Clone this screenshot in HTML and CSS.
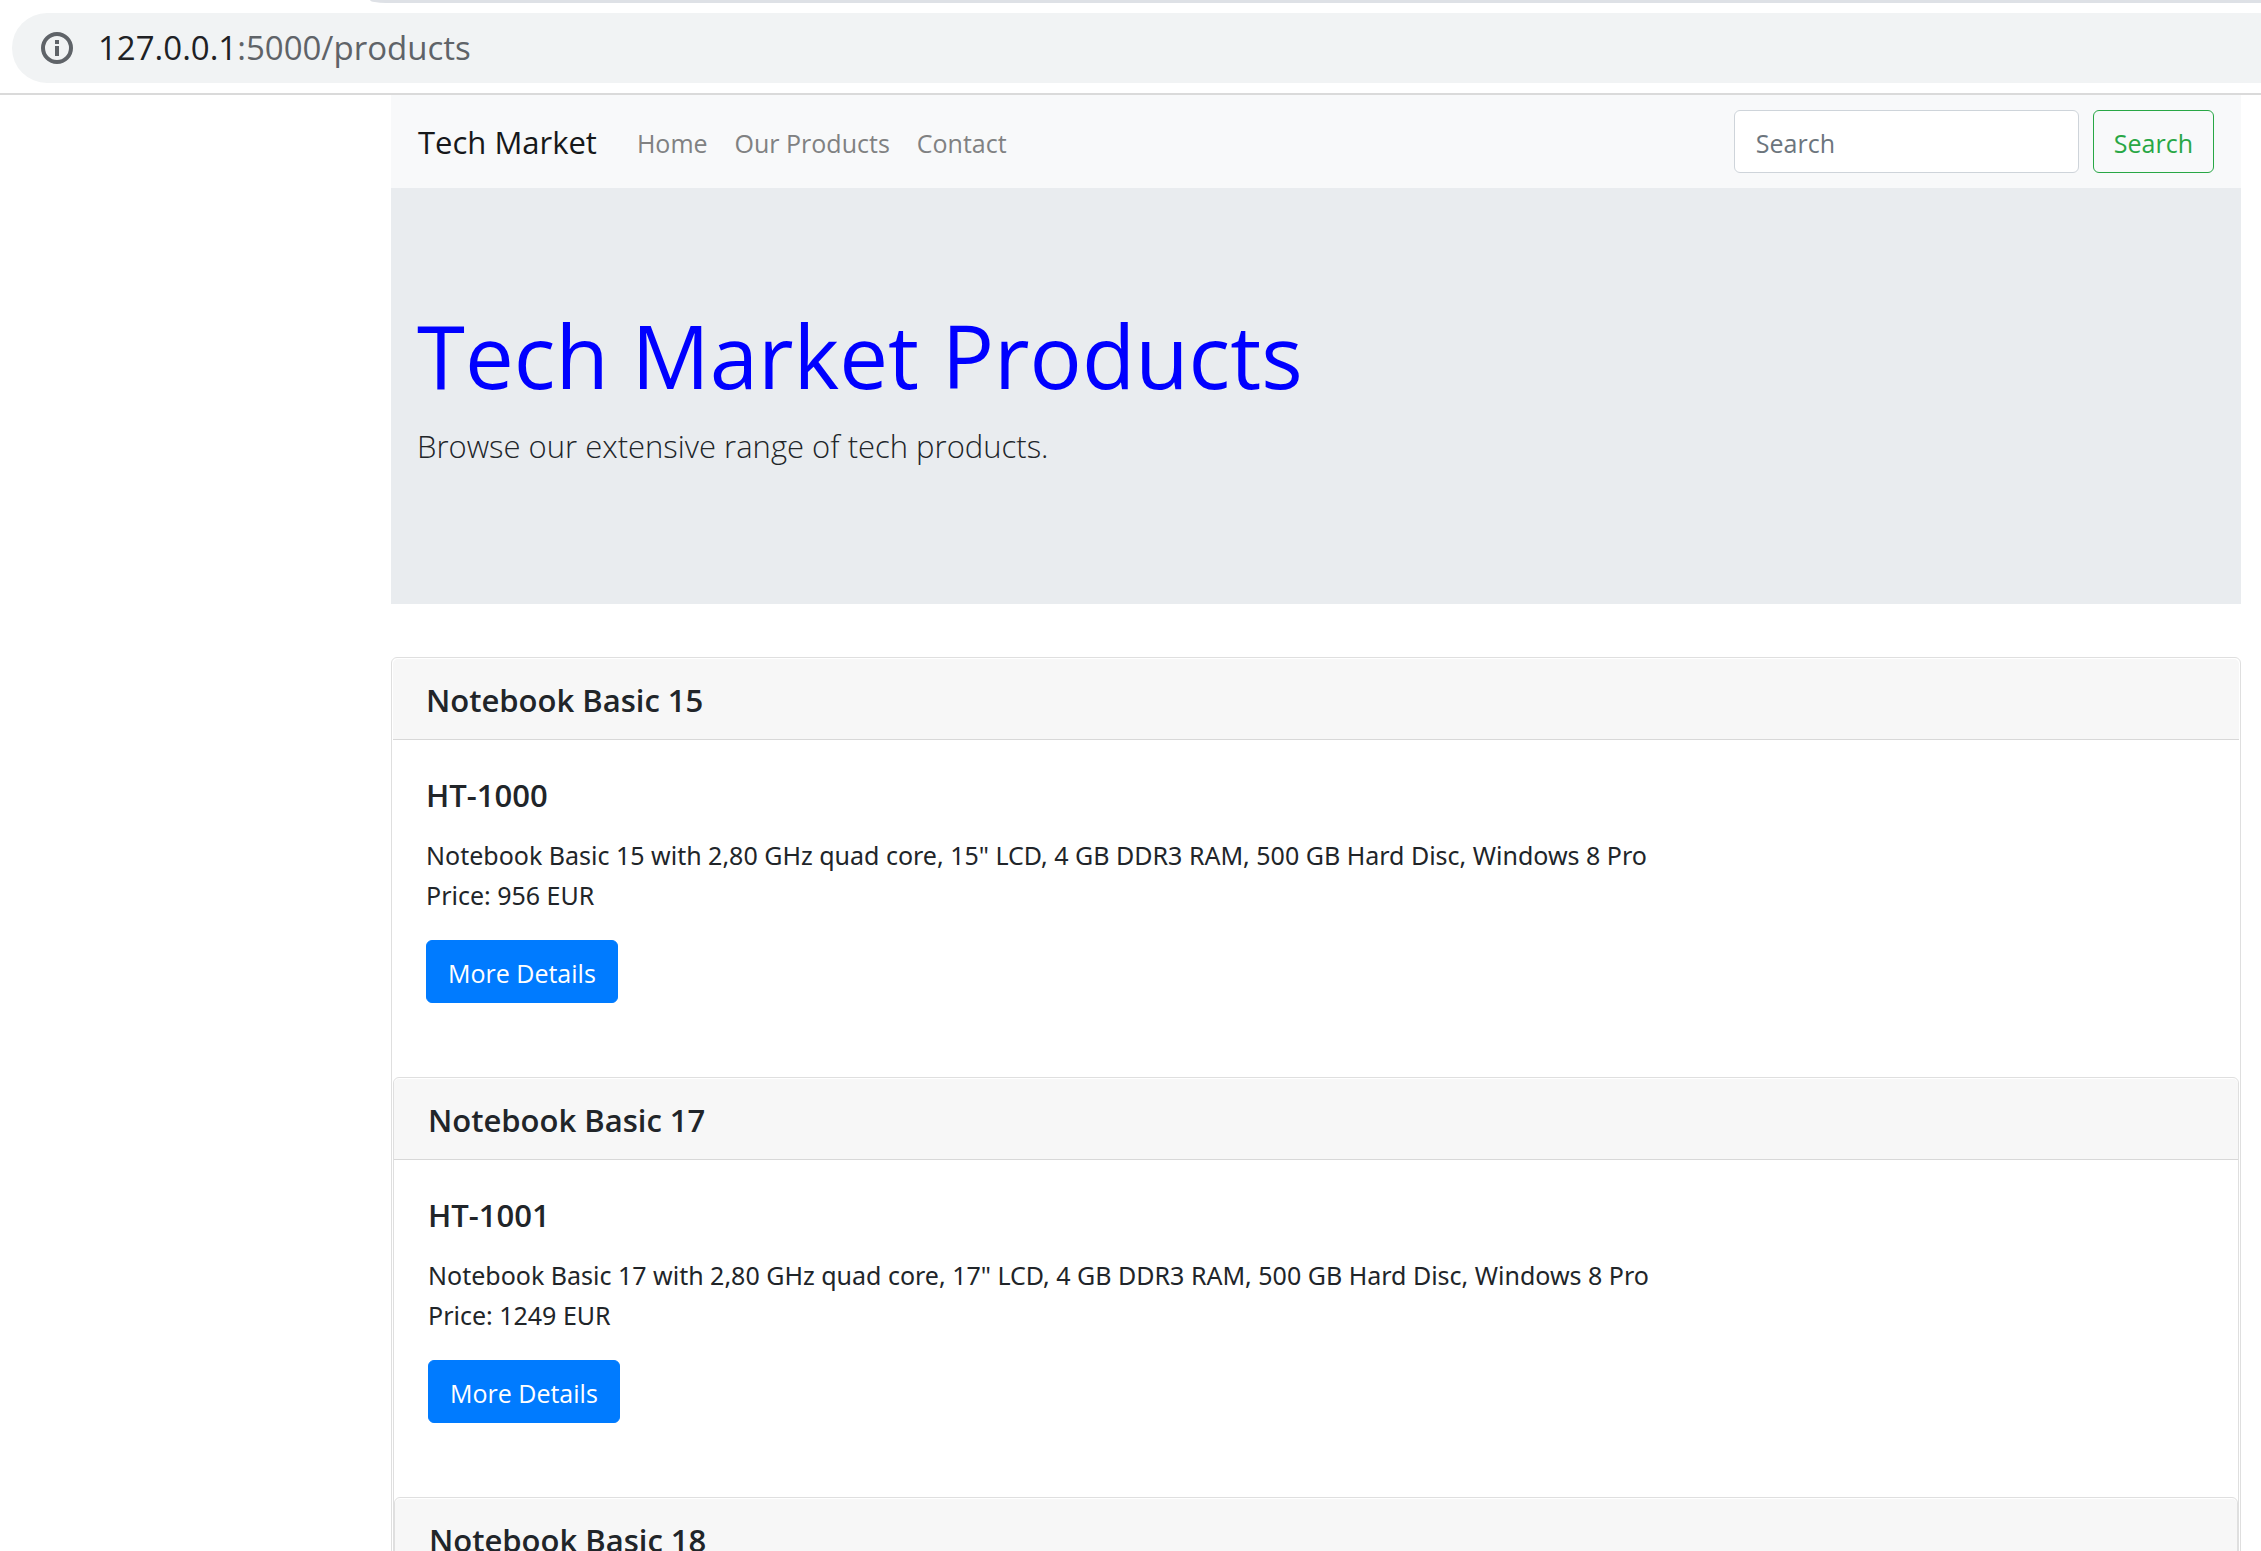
FILE: index.html
```html
<!DOCTYPE html>
<html lang="en">
<head>
<meta charset="utf-8">
<meta name="viewport" content="width=device-width, initial-scale=1">
<title>Tech Market Products</title>
<link rel="stylesheet" href="styles.css">
</head>
<body>
<div class="browser-bar">
  <div class="tab-edge"></div>
  <div class="omnibox">
    <button class="info-button" type="button" aria-label="View site information">
      <svg class="info-icon" viewBox="0 0 32 32" aria-hidden="true">
        <circle cx="16" cy="16" r="14" fill="none" stroke="#5f6368" stroke-width="4"/>
        <path d="M14 8h4v4h-4zM14 14h4v10h-4z" fill="#5f6368"/>
      </svg>
    </button>
    <div class="address"><span class="address-host">127.0.0.1</span>:5000/products</div>
  </div>
</div>
<div class="container">
  <nav class="navbar">
    <a class="brand" href="#">Tech Market</a>
    <ul class="nav-links">
      <li><a href="#">Home</a></li>
      <li><a href="#">Our Products</a></li>
      <li><a href="#">Contact</a></li>
    </ul>
    <form class="search-form">
      <input class="search-input" type="search" placeholder="Search" aria-label="Search">
      <button class="button button-outline" type="submit">Search</button>
    </form>
  </nav>
  <header class="hero">
    <h1>Tech Market Products</h1>
    <p class="lead">Browse our extensive range of tech products.</p>
  </header>
  <main>
    <div class="card card-outer">
      <h2 class="card-header">Notebook Basic 15</h2>
      <div class="card-body">
        <h3 class="card-title">HT-1000</h3>
        <p class="card-text">Notebook Basic 15 with 2,80 GHz quad core, 15" LCD, 4 GB DDR3 RAM, 500 GB Hard Disc, Windows 8 Pro<br>Price: 956 EUR</p>
        <a class="button button-primary" href="#">More Details</a>
      </div>
      <div class="card">
        <h2 class="card-header">Notebook Basic 17</h2>
        <div class="card-body">
          <h3 class="card-title">HT-1001</h3>
          <p class="card-text">Notebook Basic 17 with 2,80 GHz quad core, 17" LCD, 4 GB DDR3 RAM, 500 GB Hard Disc, Windows 8 Pro<br>Price: 1249 EUR</p>
          <a class="button button-primary" href="#">More Details</a>
        </div>
        <div class="card">
          <h2 class="card-header">Notebook Basic 18</h2>
        </div>
      </div>
    </div>
  </main>
</div>
</body>
</html>
```
FILE: styles.css
```css
* {
  box-sizing: border-box;
}

body {
  margin: 0;
  height: 100vh;
  overflow: hidden;
  background: #fff;
  color: #212529;
  font-family: "Open Sans", "Noto Sans", sans-serif;
  font-size: 25px;
  line-height: 40px;
}

h1, h2, h3, p, ul {
  margin: 0;
  padding: 0;
}

a {
  text-decoration: none;
}

.browser-bar {
  padding-bottom: 10px;
  border-bottom: 2px solid #dadada;
}

.tab-edge {
  height: 3px;
  margin-left: 370px;
  border-bottom-left-radius: 16px 3px;
  background: #dee1e6;
}

.omnibox {
  display: flex;
  align-items: center;
  gap: 25px;
  height: 70px;
  margin: 10px 0 0 12px;
  padding-left: 29px;
  border-radius: 35px 0 0 35px;
  background: #f1f3f4;
}

.info-button {
  display: flex;
  padding: 0;
  border: 0;
  background: none;
}

.info-icon {
  width: 32px;
  height: 32px;
}

.address {
  color: #5f6368;
  font-size: 33px;
}

.address-host {
  color: #202124;
}

.container {
  padding: 0 20px 0 391px;
}

.navbar {
  display: flex;
  align-items: center;
  padding: 15px 27px;
  background: #f8f9fa;
}

.brand {
  margin-right: 40px;
  color: #16181a;
  font-size: 31px;
}

.nav-links {
  display: flex;
  gap: 27px;
  padding-top: 2px;
  list-style: none;
}

.nav-links a {
  color: #808182;
}

.search-form {
  display: flex;
  gap: 14px;
  margin-left: auto;
}

.search-input {
  width: 345px;
  height: 63px;
  padding: 2px 21px 0;
  border: 1px solid #ced4da;
  border-radius: 6px;
  background: #fff;
  font: inherit;
}

.search-input::placeholder {
  color: #6c757d;
}

.button {
  display: inline-block;
  height: 63px;
  padding: 12px 21px 10px;
  border: 1px solid;
  border-radius: 6px;
  font: inherit;
}

.button-outline {
  padding: 12px 20px 10px;
  border-color: #28a745;
  background: none;
  color: #28a745;
}

.button-primary {
  border-color: #007bff;
  background: #007bff;
  color: #fff;
}

.hero {
  padding: 110px 26px 133px;
  background: #e9ecef;
}

.hero h1 {
  margin-bottom: 8px;
  color: #00f;
  font-size: 87px;
  font-weight: 400;
  line-height: 115px;
}

.lead {
  font-size: 31px;
  font-weight: 300;
  line-height: 50px;
}

.card {
  padding-top: 1px;
  border: 1px solid #dfdfdf;
  border-radius: 6px;
}

.card-outer {
  margin-top: 53px;
  padding: 1px;
}

.card-header {
  padding: 21px 33px 19px;
  border-bottom: 1px solid #d8d8d8;
  border-radius: 5px 5px 0 0;
  background: #f7f7f7;
  font-size: 31px;
  font-weight: 600;
}

.card-body {
  padding: 35px 33px 74px;
}

.card .card .card-header,
.card .card .card-body {
  padding-left: 34px;
}

.card-title {
  margin-bottom: 20px;
  font-size: 31px;
  font-weight: 600;
}

.card-text {
  margin-bottom: 25px;
  font-family: "Noto Sans", "Open Sans", sans-serif;
}

.card-body .button {
  display: block;
  width: fit-content;
}
```
